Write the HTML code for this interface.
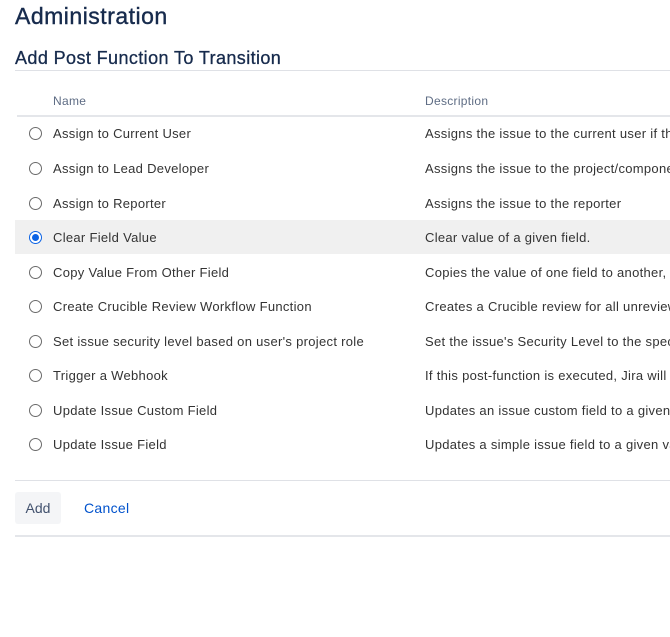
<!DOCTYPE html>
<html><head><style>
body{margin:0;width:670px;height:637px;overflow:hidden;background:#fff;font-family:"Liberation Sans",sans-serif;color:#172b4d;position:relative}
.a{position:absolute;white-space:nowrap}
h1{position:absolute;left:15px;top:3px;margin:0;font-size:23px;font-weight:normal;color:#172b4d;letter-spacing:0.5px;-webkit-text-stroke:0.4px #172b4d}
h2{position:absolute;left:15px;top:48px;margin:0;font-size:18px;font-weight:normal;color:#172b4d;letter-spacing:0.4px;-webkit-text-stroke:0.3px #172b4d}
.line{position:absolute;left:15px;right:0;height:1px;background:#dfe1e6}
.hd{position:absolute;top:94px;font-size:12px;color:#5e6c84;letter-spacing:0.3px}
.row{position:absolute;left:15px;right:0;height:34px;font-size:13px;color:#333;letter-spacing:0.3px}
.row span{position:absolute;top:10px;white-space:nowrap}
.r{position:absolute;left:14px;top:11px;width:11px;height:11px;border:1px solid #6b6b6b;border-radius:50%;background:#fff}
.sel{background:#f0f0f0}
.sel .r{border-color:#0b63e5}
.sel .r:after{content:"";position:absolute;left:2px;top:2px;width:7px;height:7px;border-radius:50%;background:#0b63e5}
</style></head><body>
<h1>Administration</h1>
<h2>Add Post Function To Transition</h2>
<div class="line" style="top:70px"></div>
<div class="hd" style="left:53px">Name</div>
<div class="hd" style="left:425px">Description</div>
<div class="line" style="top:115px;left:17px;height:2px;background:#e4e6ea"></div>
<div class="row" style="top:116px"><div class="r"></div><span style="left:38px">Assign to Current User</span><span style="left:410px">Assigns the issue to the current user if th</span></div>
<div class="row" style="top:151px"><div class="r"></div><span style="left:38px">Assign to Lead Developer</span><span style="left:410px">Assigns the issue to the project/compone</span></div>
<div class="row" style="top:186px"><div class="r"></div><span style="left:38px">Assign to Reporter</span><span style="left:410px">Assigns the issue to the reporter</span></div>
<div class="row sel" style="top:220px"><div class="r"></div><span style="left:38px">Clear Field Value</span><span style="left:410px">Clear value of a given field.</span></div>
<div class="row" style="top:255px"><div class="r"></div><span style="left:38px">Copy Value From Other Field</span><span style="left:410px">Copies the value of one field to another, </span></div>
<div class="row" style="top:289px"><div class="r"></div><span style="left:38px">Create Crucible Review Workflow Function</span><span style="left:410px">Creates a Crucible review for all unreview</span></div>
<div class="row" style="top:324px"><div class="r"></div><span style="left:38px">Set issue security level based on user's project role</span><span style="left:410px">Set the issue's Security Level to the spec</span></div>
<div class="row" style="top:358px"><div class="r"></div><span style="left:38px">Trigger a Webhook</span><span style="left:410px">If this post-function is executed, Jira will</span></div>
<div class="row" style="top:393px"><div class="r"></div><span style="left:38px">Update Issue Custom Field</span><span style="left:410px">Updates an issue custom field to a given</span></div>
<div class="row" style="top:427px"><div class="r"></div><span style="left:38px">Update Issue Field</span><span style="left:410px">Updates a simple issue field to a given va</span></div>
<div class="line" style="top:480px"></div>
<div class="a" style="left:15px;top:492px;width:46px;height:32px;background:#f4f5f7;border-radius:3px;font-size:14px;color:#42526e;text-align:center;line-height:32px">Add</div>
<div class="a" style="left:84px;top:500px;font-size:14px;color:#0052cc;letter-spacing:0.3px">Cancel</div>
<div class="line" style="top:535px;height:2px;background:#e4e6ea"></div>
</body></html>
